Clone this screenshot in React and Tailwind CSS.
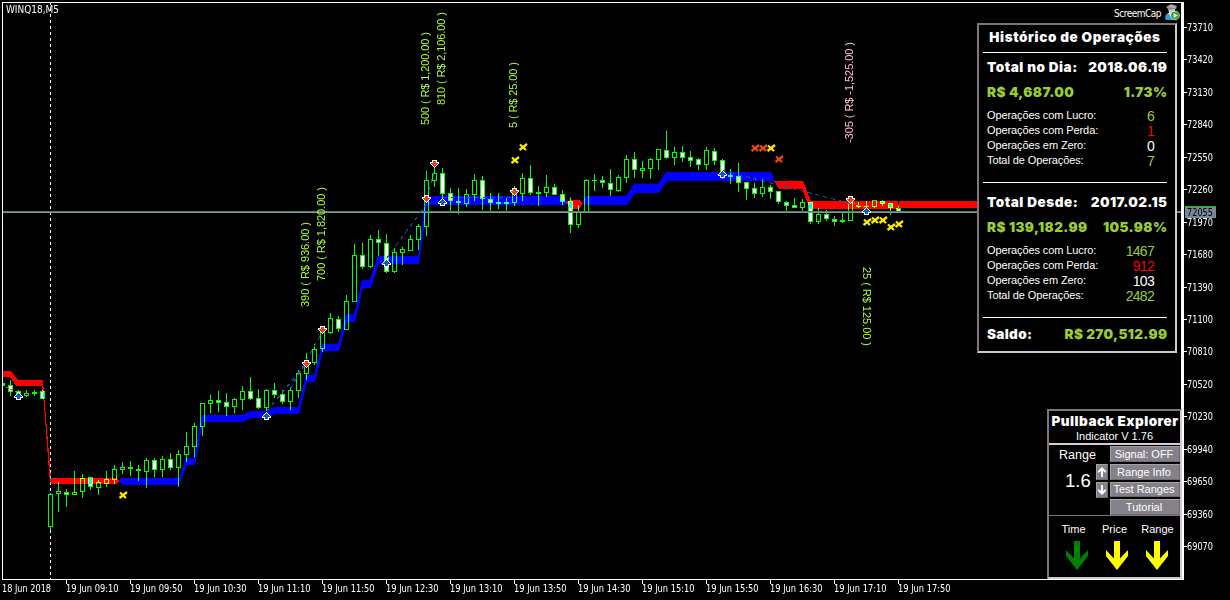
import React from 'react';

// [x, high, bodyTop, bodyBottom, low, filled]
const CANDLES = [
  [2, 383, 383, 386, 386, 1], [10, 380, 385, 392, 396, 1], [18, 390, 391, 396, 396, 1], [26, 390, 393, 396, 397, 0],
  [34, 390, 392, 394, 396, 0], [42, 390, 391, 399, 399, 1], [50, 493, 494, 527, 530, 0], [58, 482, 491, 494, 512, 0],
  [66, 489, 492, 495, 507, 1], [74, 471, 492, 495, 495, 0], [82, 474, 478, 492, 498, 0], [90, 477, 477, 487, 490, 1],
  [98, 480, 482, 488, 495, 0], [106, 471, 479, 484, 487, 0], [114, 465, 469, 480, 484, 0], [122, 462, 467, 470, 474, 0],
  [130, 461, 467, 469, 476, 0], [138, 465, 469, 471, 481, 0], [146, 458, 460, 472, 488, 0], [154, 458, 460, 470, 477, 1],
  [162, 456, 459, 470, 477, 0], [170, 453, 459, 468, 470, 1], [178, 450, 454, 468, 487, 0], [186, 432, 446, 455, 462, 0],
  [194, 423, 426, 447, 457, 0], [202, 403, 403, 427, 436, 0], [210, 395, 400, 404, 413, 0], [218, 391, 400, 403, 412, 1],
  [226, 393, 402, 407, 416, 1], [234, 398, 399, 407, 413, 0], [242, 386, 391, 400, 410, 0], [250, 377, 391, 399, 400, 1],
  [258, 389, 398, 408, 409, 1], [266, 389, 390, 408, 411, 0], [274, 383, 390, 395, 398, 1], [282, 390, 394, 402, 404, 1],
  [290, 388, 390, 402, 410, 0], [298, 370, 373, 391, 398, 0], [306, 353, 363, 374, 380, 0], [314, 344, 349, 363, 365, 0],
  [322, 328, 330, 349, 352, 0], [330, 313, 318, 333, 334, 0], [338, 316, 319, 329, 332, 1], [346, 295, 301, 330, 330, 0],
  [354, 244, 255, 302, 302, 0], [362, 243, 255, 267, 269, 1], [370, 235, 239, 267, 268, 0], [378, 230, 239, 243, 256, 1],
  [386, 234, 243, 272, 273, 1], [394, 248, 252, 272, 273, 0], [402, 247, 249, 253, 265, 0], [410, 235, 239, 251, 251, 0],
  [418, 224, 226, 240, 250, 0], [426, 171, 180, 227, 236, 0], [434, 165, 173, 181, 187, 0], [442, 168, 173, 194, 200, 1],
  [450, 188, 193, 201, 211, 1], [458, 188, 201, 203, 214, 0], [466, 189, 194, 204, 207, 0], [474, 174, 180, 195, 201, 0],
  [482, 176, 180, 199, 210, 1], [490, 193, 199, 203, 211, 1], [498, 193, 202, 204, 209, 0], [506, 198, 202, 204, 211, 0],
  [514, 186, 193, 203, 206, 0], [522, 173, 178, 194, 201, 0], [530, 165, 178, 193, 195, 1], [538, 186, 192, 194, 206, 0],
  [546, 175, 187, 193, 197, 0], [554, 184, 187, 195, 195, 1], [562, 190, 194, 202, 205, 1], [570, 197, 201, 225, 233, 1],
  [578, 205, 211, 225, 228, 0], [586, 179, 180, 212, 212, 0], [594, 174, 180, 181, 191, 0], [602, 176, 180, 183, 188, 1],
  [610, 169, 183, 190, 196, 1], [618, 175, 177, 191, 192, 0], [626, 155, 159, 178, 183, 0], [634, 152, 159, 170, 178, 1],
  [642, 161, 168, 171, 178, 0], [650, 158, 159, 169, 179, 0], [658, 149, 149, 160, 170, 0], [666, 131, 150, 158, 159, 1],
  [674, 147, 152, 158, 165, 0], [682, 146, 152, 158, 162, 1], [690, 151, 157, 161, 167, 1], [698, 158, 159, 165, 170, 1],
  [706, 147, 150, 165, 170, 0], [714, 148, 151, 161, 165, 1], [722, 159, 160, 173, 179, 1], [730, 169, 175, 177, 184, 0],
  [738, 163, 176, 183, 192, 1], [746, 182, 182, 189, 200, 1], [754, 183, 188, 194, 198, 1], [762, 179, 187, 194, 197, 0],
  [770, 185, 187, 192, 199, 1], [778, 191, 191, 202, 204, 1], [786, 201, 202, 206, 211, 1], [794, 198, 205, 208, 208, 1],
  [802, 199, 202, 208, 211, 0], [810, 202, 202, 222, 224, 1], [818, 208, 214, 222, 224, 0], [826, 210, 214, 219, 221, 1],
  [834, 216, 219, 222, 226, 1], [842, 213, 220, 222, 223, 0], [850, 199, 200, 221, 221, 0], [858, 202, 205, 207, 208, 1],
  [866, 201, 206, 207, 208, 0], [874, 200, 200, 207, 208, 0], [882, 200, 201, 204, 206, 1], [890, 203, 203, 208, 215, 1],
  [898, 205, 208, 212, 213, 1]
];

const BANDS = [
  { color: '#ff0000', points: '3,371 11,371 18,380 43,380 45,406 51,478 116,478 119,481 116,484 50,484 44,406 42,386 16,386 10,377 3,377' },
  { color: '#0000ff', points: '118,481 122,478 179,478 186,458 194,458 202,415 242,415 250,411 266,411 274,407 298,407 306,375 314,375 322,344 338,344 346,314 354,314 362,280 370,280 378,256 418,256 426,196 564,196 567,202 564,205 427,205 419,264 379,264 371,288 363,288 355,322 347,322 339,351 323,351 315,382 307,382 299,414 275,414 267,418 251,418 243,422 203,422 195,465 187,465 179,485 122,485' },
  { color: '#ff0000', points: '566,202 571,200 579,200 583,203 579,209 571,209' },
  { color: '#0000ff', points: '582,202 586,196 626,196 634,184 658,184 666,172 771,172 775,181 667,181 659,193 635,193 627,205 586,205' },
  { color: '#ff0000', points: '774,181 803,181 811,201 898,201 898,209 810,209 802,189 779,189' },
  { color: '#ff0000', points: '899,201 977,201 977,208 899,208' }
];

const PROFITS = [
  { x: 309, y: 307, len: 85, text: '390 ( R$ 936.00 )' },
  { x: 325, y: 281, len: 94, text: '700 ( R$ 1,820.00 )' },
  { x: 429, y: 125, len: 93, text: '500 ( R$ 1,200.00 )' },
  { x: 445, y: 105, len: 93, text: '810 ( R$ 2,106.00 )' },
  { x: 517, y: 128, len: 66, text: '5 ( R$ 25.00 )' },
  { x: 853, y: 143, len: 101, text: '-305 ( R$ -1,525.00 )', loss: true },
  { x: 863, y: 267, len: 79, text: '25 ( R$ 125.00 )', down: true }
];

const SELLS = [[306, 363], [322, 329], [426, 198], [434, 163], [514, 191], [850, 199]];
const BUYS = [[18, 396], [266, 416], [386, 263], [442, 202], [722, 174], [866, 211]];

const CROSSES = [
  [123, 495], [515, 160], [523, 147], [771, 148], [867, 222], [875, 220], [883, 220], [891, 227], [899, 224]
];
const RED_CROSSES = [[755, 148], [763, 148], [779, 159]];

const TRADES = [
  [266, 411, 306, 363], [290, 388, 322, 331], [386, 258, 426, 204], [426, 198, 434, 170],
  [442, 197, 514, 197], [722, 170, 850, 203]
];

const PRICES = [73710, 73420, 73130, 72840, 72550, 72260, 71970, 71680, 71390, 71100, 70810, 70520, 70230, 69940, 69650, 69360, 69070];

const TIMES = [
  '19 Jun 09:10', '19 Jun 09:50', '19 Jun 10:30', '19 Jun 11:10', '19 Jun 11:50', '19 Jun 12:30', '19 Jun 13:10',
  '19 Jun 13:50', '19 Jun 14:30', '19 Jun 15:10', '19 Jun 15:50', '19 Jun 16:30', '19 Jun 17:10', '19 Jun 17:50'
];

const AXIS_FONT = '"DejaVu Sans Condensed", "DejaVu Sans", sans-serif';

const Candle = ({ data }) => {
  const [x, high, top, bottom, low, filled] = data;
  const inner = bottom - top - 2;
  return (
    <g>
      <rect x={x} y={high} width="1" height={low - high} fill="#00ff00" />
      <rect x={x - 2} y={top} width="5" height={bottom - top} fill="#00ff00" />
      {inner > 0 && <rect x={x - 1} y={top + 1} width="3" height={inner} fill={filled ? '#ffffff' : '#000000'} />}
    </g>
  );
};

const Arrow = ({ x, y, sell }) => (
  <g transform={sell ? `translate(${x} ${y + 1}) scale(1 -1)` : `translate(${x} ${y})`}>
    <path d="M0 -4h1v1h1v1h1v1h1v1h1v2h-2v2h-5v-2h-2v-2h1v-1h1v-1h1v-1h1z" fill="#ffffff" />
    <path d="M0 -3h1v1h1v1h1v1h1v1h-2v2h-3v-2h-2v-1h1v-1h1v-1h1z" fill={sell ? '#f03c14' : '#0a5cb4'} />
  </g>
);

const Cross = ({ x, y, color }) => (
  <path d={`M${x - 3} ${y - 2.5}L${x + 3} ${y + 3}M${x + 4} ${y - 3}L${x - 3.5} ${y + 3}`} stroke={color} strokeWidth="2.3" fill="none" />
);

const Chart = () => (
  <svg width="1230" height="600" viewBox="0 0 1230 600" className="block isolate">
    <rect width="1230" height="600" fill="#000000" />

    <g shapeRendering="crispEdges">
      {/* Frame and period separator */}
      <rect x="2" y="2" width="1180" height="1" fill="#ffffff" />
      <rect x="2" y="2" width="1" height="578" fill="#ffffff" />
      <rect x="2" y="579" width="1182" height="1" fill="#ffffff" />
      <rect x="1181" y="2" width="3" height="578" fill="#ffffff" />
      <line x1="50.5" y1="2" x2="50.5" y2="579" stroke="#ffffff" strokeDasharray="3 3" />

      <g>
        <rect x="3" y="383" width="2" height="3" fill="#00ff00" />
        {CANDLES.slice(1).map((c) => <Candle key={c[0]} data={c} />)}
      </g>

      {BANDS.map((b, i) => (
        <polygon key={i} points={b.points} fill={b.color} className="mix-blend-difference" />
      ))}

      {/* Last and bid price */}
      <rect x="3" y="211" width="1178" height="1" fill="#3c8c50" />
      <rect x="3" y="212" width="1178" height="1" fill="#8494a4" />

      {TRADES.map(([x1, y1, x2, y2], i) => (
        <line key={i} x1={x1 + 0.5} y1={y1 + 0.5} x2={x2 + 0.5} y2={y2 + 0.5} stroke="#0a5aa8" strokeDasharray="4 4" />
      ))}
      <line x1="6" y1="387" x2="16" y2="392" stroke="#d24a1e" strokeDasharray="3 2" />
      <line x1="853" y1="203" x2="866" y2="208" stroke="#d24a1e" strokeDasharray="3 2" />

      {SELLS.map(([x, y]) => <Arrow key={x} x={x} y={y} sell />)}
      {BUYS.map(([x, y]) => <Arrow key={x} x={x} y={y} />)}
    </g>

    {CROSSES.map(([x, y]) => <Cross key={x} x={x} y={y} color="#ffea00" />)}
    {RED_CROSSES.map(([x, y]) => <Cross key={x} x={x} y={y} color="#f04614" />)}

    {PROFITS.map((p) => (
      <text
        key={p.text}
        transform={`translate(${p.x} ${p.y}) rotate(${p.down ? 90 : -90})`}
        textLength={p.len}
        fontFamily='"Liberation Sans", Arial, sans-serif'
        fontSize="11"
        fill={p.loss ? '#ffc0cb' : '#adff2f'}
      >
        {p.text}
      </text>
    ))}

    {/* Axes */}
    <g fontFamily={AXIS_FONT} fontSize="10" fill="#ffffff">
      <text x="6" y="13" textLength="53" lengthAdjust="spacingAndGlyphs">WINQ18,M5</text>
      {PRICES.map((price, i) => {
        const y = Math.round(27 + i * 32.44);
        return (
          <g key={price}>
            <rect x="1184" y={y} width="3" height="1" />
            <text x="1187" y={y + 4} textLength="26" lengthAdjust="spacingAndGlyphs">{price}</text>
          </g>
        );
      })}
      <text x="2" y="592" textLength="49" lengthAdjust="spacingAndGlyphs">18 Jun 2018</text>
      {TIMES.map((time, i) => (
        <g key={time}>
          <rect x={66 + i * 64} y="580" width="1" height="4" />
          <text x={66 + i * 64} y="592" textLength="52.5" lengthAdjust="spacingAndGlyphs">{time}</text>
        </g>
      ))}
      <rect x="1185" y="206" width="31" height="12" fill="#778899" />
      <rect x="1185" y="206" width="31" height="1" fill="#00c800" />
      <text x="1187" y="216" textLength="26" lengthAdjust="spacingAndGlyphs" fill="#000000">72055</text>
    </g>
  </svg>
);

const Stat = ({ label, value, color }) => (
  <div className="flex h-[15px] items-center justify-between pl-1 pr-[13px]">
    <span className="text-[11px] tracking-[-0.1px]">{label}</span>
    <span className={`relative top-px text-[14px] tracking-[-0.7px] ${color}`}>{value}</span>
  </div>
);

const Summary = ({ title, date, total, percent, stats }) => (
  <div className="border-b border-white pb-[14px] pt-[3px]">
    <div className="flex h-[22px] items-center justify-between pl-1 font-[Inter] text-[13.5px] font-black">
      <span className="tracking-[0.55px]">{title}</span>
      <span className="-mr-[0.4px] tracking-[0.4px]">{date}</span>
    </div>
    <div className="mt-[3px] flex h-[22px] items-center justify-between pl-1 font-[Inter] text-[13.5px] font-black tracking-[0.4px] text-[#9acd32]">
      <span>{total}</span>
      <span className="-mr-[0.4px]">{percent}</span>
    </div>
    <div className="mt-[5px]">
      <Stat label="Operações com Lucro:" value={stats[0]} color="text-[#9acd32]" />
      <Stat label="Operações com Perda:" value={stats[1]} color="text-[#ff0000]" />
      <Stat label="Operações em Zero:" value={stats[2]} color="text-white" />
      <Stat label="Total de Operações:" value={stats[3]} color="text-[#9acd32]" />
    </div>
  </div>
);

const HistoryPanel = () => (
  <div className="absolute left-[977px] top-[23px] h-[330px] w-[200px] border-2 border-b-[#d2c8d2] border-l-[#80757c] border-r-[#d2c8d2] border-t-[#80757c] bg-black pl-1 pr-2">
    <div className="flex h-[28px] items-center justify-center whitespace-nowrap border-b border-white pb-[2px] font-[Inter] text-[13.5px] font-black tracking-[0.6px]">
      Histórico de Operações
    </div>
    <Summary title="Total no Dia:" date="2018.06.19" total="R$ 4,687.00" percent="1.73%" stats={[6, 1, 0, 7]} />
    <div className="h-[5px]" />
    <Summary title="Total Desde:" date="2017.02.15" total="R$ 139,182.99" percent="105.98%" stats={[1467, 912, 103, 2482]} />
    <div className="flex h-[32px] items-center justify-between pl-1 font-[Inter] text-[13.5px] font-black tracking-[0.35px]">
      <span>Saldo:</span>
      <span className="-mr-[0.4px] text-[#9acd32]">R$ 270,512.99</span>
    </div>
  </div>
);

const PanelButton = ({ children }) => (
  <div className="flex h-4 items-center justify-center border border-b-[#6e6874] border-l-[#9aaa9a] border-r-[#6e6874] border-t-[#9aaa9a] bg-[#85808a] pt-px pr-[2px] text-[11px] leading-none">
    {children}
  </div>
);

const SmallArrow = ({ down }) => (
  <div className="flex h-4 w-3 items-center justify-center border border-b-[#6e6874] border-l-[#9aaa9a] border-r-[#6e6874] border-t-[#9aaa9a] bg-[#85808a]">
    <svg width="8" height="10" viewBox="0 0 8 10" className={down ? 'rotate-180' : ''}>
      <path d="M4 0L8 4V6L5 4V10H3V4L0 6V4Z" fill="#ffffff" />
    </svg>
  </div>
);

const Trend = ({ label, color, align }) => (
  <div className="flex w-10 flex-col items-center">
    <span className={`text-[11px] leading-[13px] ${align}`}>{label}</span>
    <svg width="22" height="29" viewBox="0 0 22 29" className={`mt-[5px] ${color}`}>
      <path d="M8 0H14V17.5L22 9V15L11 29L0 15V9L8 17.5Z" fill="currentColor" />
    </svg>
  </div>
);

const PullbackPanel = () => (
  <div className="absolute left-[1047px] top-[409px] flex h-[170px] w-[135px] flex-col border-2 border-b-[#d2c8d2] border-l-[#80757c] border-r-[#d2c8d2] border-t-[#80757c] bg-black">
    <div className="h-[34px] border-b-2 border-[#dcc8dc] text-center">
      <div className="whitespace-nowrap pl-px font-[Inter] text-[13.5px] font-black leading-[20px] tracking-[0.5px]">Pullback Explorer</div>
      <div className="text-[11px] leading-[11px]">Indicator V 1.76</div>
    </div>
    <div className="flex h-[71px] border-b border-[#80757c] pt-px">
      <div className="flex w-[61px] flex-col">
        <span className="pl-[10px] text-[12.5px] leading-[18px]">Range</span>
        <div className="flex justify-between pr-[2px]">
          <span className="pl-4 pt-[7px] text-[18.5px] leading-[20px]">1.6</span>
          <div className="flex flex-col gap-[2px]">
            <SmallArrow />
            <SmallArrow down />
          </div>
        </div>
      </div>
      <div className="flex w-[70px] flex-col gap-[2px]">
        <PanelButton>Signal: OFF</PanelButton>
        <PanelButton>Range Info</PanelButton>
        <PanelButton>Test Ranges</PanelButton>
        <PanelButton>Tutorial</PanelButton>
      </div>
    </div>
    <div className="flex pl-[8px] pt-[7px]">
      <Trend label="Time" color="text-[#008000]" align="pr-[7px]" />
      <Trend label="Price" color="text-[#ffff00]" align="pr-[5px]" />
      <Trend label="Range" color="text-[#ffff00]" align="pl-px" />
    </div>
  </div>
);

const ExpertBadge = () => (
  <div className="absolute right-[50px] top-[4px] flex items-center gap-[4px] font-['DejaVu_Sans_Condensed'] text-[10px]">
    <span className="pt-[2px] tracking-[-0.5px]">ScreemCap</span>
    <svg width="15" height="17" viewBox="0 0 15 17">
      <path d="M0 15C0 10 2 9 5 9L11 16H2Z" fill="#2f9be0" />
      <path d="M3 9L7 14L9 9Z" fill="#ffffff" />
      <path d="M3 4H10V9L7 11L4 9Z" fill="#cfcfcf" />
      <path d="M1 3L6 0L12 2L11 5L4 6Z" fill="#8c8c8c" />
      <path d="M2 3L6 1L11 2.5L10 4Z" fill="#b4b4b4" />
      <circle cx="10" cy="11.5" r="4.7" fill="#e4f6e0" />
      <circle cx="10" cy="11.5" r="4" fill="#34a82c" />
      <path d="M8.7 9L12.7 11.5L8.7 14Z" fill="#ffffff" />
    </svg>
  </div>
);

const App = () => {
  return (
    <div className="relative h-[600px] w-[1230px] overflow-hidden bg-black font-['Liberation_Sans'] text-white">
      <Chart />
      <ExpertBadge />
      <HistoryPanel />
      <PullbackPanel />
    </div>
  );
};

export default App;
